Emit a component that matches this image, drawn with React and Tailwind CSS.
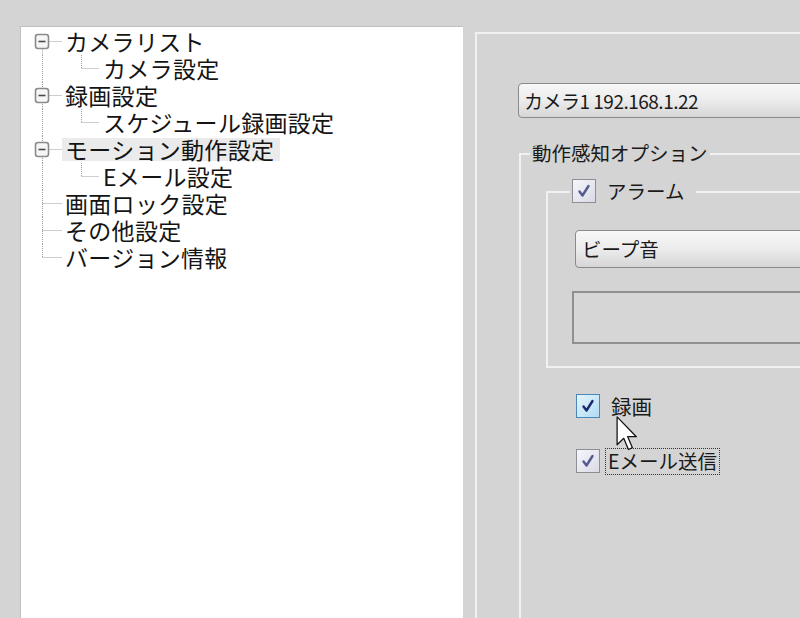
import React from 'react';

const jp = { fontFamily: '"Noto Sans CJK JP", "Noto Sans", sans-serif' };

const treeItems = [
    { label: 'カメラリスト', level: 0, box: true },
    { label: 'カメラ設定', level: 1 },
    { label: '録画設定', level: 0, box: true },
    { label: 'スケジュール録画設定', level: 1 },
    { label: 'モーション動作設定', level: 0, box: true, selected: true },
    { label: 'Eメール設定', level: 1 },
    { label: '画面ロック設定', level: 0 },
    { label: 'その他設定', level: 0 },
    { label: 'バージョン情報', level: 0, last: true },
];

function TreeGutter({ item, index }) {
    const w = item.level === 0 ? 41 : 79;
    const dot = { stroke: '#9c9c9c', strokeWidth: 1, strokeDasharray: '1 1' };
    // main vertical line through the root column
    const y1 = index === 0 ? 19.5 : 0;
    const y2 = item.last ? 13.5 : 27;
    return (
        <svg width={w} height="27" viewBox={`0 0 ${w} 27`} className="shrink-0">
            <line x1="21.5" y1={y1} x2="21.5" y2={y2} {...dot} />
            {item.level === 0 && (
                <line x1={item.box ? 27.5 : 21.5} y1="13.5" x2="41" y2="13.5" {...dot} />
            )}
            {item.level === 1 && (
                <>
                    <line x1="60.5" y1="0" x2="60.5" y2="13.5" {...dot} />
                    <line x1="60.5" y1="13.5" x2="78" y2="13.5" {...dot} />
                </>
            )}
            {item.box && (
                <>
                    <rect x="14.5" y="6.5" width="13" height="14" rx="2.5" fill="#f6f6f6" stroke="#8a8a8a" strokeWidth="1.6" />
                    <line x1="17.5" y1="13.5" x2="24.5" y2="13.5" stroke="#4a4a4a" strokeWidth="1.6" />
                </>
            )}
        </svg>
    );
}

function Check({ hover = false }) {
    return (
        <div
            className={`w-[24px] h-[24px] shrink-0 border flex items-center justify-center ${
                hover
                    ? 'border-[#4a86b8] bg-gradient-to-br from-[#e6f5fd] to-[#aedbf3]'
                    : 'border-[#8e8f94] bg-gradient-to-br from-[#f6f6fb] to-[#d9dae6]'
            }`}
        >
            <svg width="16" height="16" viewBox="0 0 16 16">
                <path
                    d="M3.5 8.5 L6.5 12.5 L12.5 3"
                    fill="none"
                    stroke={hover ? '#1d2b6c' : '#555a8e'}
                    strokeWidth="2.4"
                    strokeLinecap="round"
                    strokeLinejoin="round"
                />
            </svg>
        </div>
    );
}

export default function App() {
    return (
        <div className="w-[800px] h-[618px] bg-[#d4d4d4] flex overflow-hidden relative" style={jp}>
            <div className="pl-[20px] pt-[26px] h-full shrink-0">
                <div className="w-[443px] h-full bg-white border-t border-l border-[#bfbfbf] pt-[1px]">
                    {treeItems.map((item, i) => (
                        <div key={item.label} className="flex items-center h-[27px]">
                            <TreeGutter item={item} index={i} />
                            <span
                                className={`px-[3px] text-[23px] leading-[23px] tracking-[0.3px] text-[#141414] whitespace-nowrap ${
                                    item.selected ? 'bg-[#ebebeb] pr-[6px]' : ''
                                }`}
                            >
                                {item.label}
                            </span>
                        </div>
                    ))}
                </div>
            </div>

            <div className="flex-1 pl-[12px] pt-[32px] h-full">
                <div className="h-[700px] border-l-2 border-t-2 border-[#f1f1f1] pl-[41px] pt-[49px]">
                    <div className="w-[320px] h-[35px] rounded-[4px] border border-[#8a8a8a] bg-gradient-to-b from-[#f7f7f7] via-[#ececec] to-[#d6d6d6] flex items-center pl-[5px]">
                        <span className="text-[19px] tracking-[-0.5px] text-[#1a1a1a] leading-none">カメラ1 192.168.1.22</span>
                    </div>

                    <div className="ml-[1px] mt-[35px] w-[320px] h-[600px] border-l-2 border-t-2 border-[#f1f1f1]">
                        <div className="-mt-[13px] ml-[9px] w-fit bg-[#d4d4d4] px-[2px] h-[22px] flex items-center">
                            <span className="text-[19.5px] leading-none text-[#1a1a1a]">動作感知オプション</span>
                        </div>

                        <div className="ml-[25px] mt-[27px] border-l-2 border-t-2 border-b-2 border-[#f1f1f1] pb-[22px]">
                            <div className="-mt-[14px] ml-[22px] w-fit bg-[#d4d4d4] pl-[2px] pr-[12px] h-[24px] flex items-center gap-[11px]">
                                <Check />
                                <span className="text-[19.5px] leading-none text-[#1a1a1a]">アラーム</span>
                            </div>

                            <div className="ml-[27px] mt-[27px] h-[38px] rounded-[4px] border border-[#8a8a8a] bg-gradient-to-b from-[#f7f7f7] via-[#ececec] to-[#d6d6d6] flex items-center pl-[6px]">
                                <span className="text-[19.5px] leading-none text-[#1a1a1a]">ビープ音</span>
                            </div>

                            <div className="ml-[24px] mt-[23px] h-[53px] border-2 border-[#909090] bg-[#d6d6d6]" />
                        </div>

                        <div className="ml-[55px] mt-[26px] flex flex-col gap-[31px]">
                            <div className="flex items-center gap-[11px] h-[24px]">
                                <Check hover />
                                <span className="text-[20.5px] leading-none text-[#1a1a1a]">録画</span>
                            </div>
                            <div className="flex items-center gap-[5px] h-[24px]">
                                <Check />
                                <span className="border border-dotted border-[#333] px-[2px] h-[27px] flex items-center text-[19.5px] leading-none text-[#1a1a1a]">
                                    Eメール送信
                                </span>
                            </div>
                        </div>
                    </div>
                </div>
            </div>

            {/* mouse pointer */}
            <svg className="absolute left-[616px] top-[416px]" width="22" height="36" viewBox="0 0 12 20">
                <path
                    d="M0.5 0.5 L0.5 16 L4.2 12.4 L6.8 18.6 L9 17.6 L6.4 11.5 L11.2 11.5 Z"
                    fill="#ffffff"
                    stroke="#111"
                    strokeWidth="0.7"
                    strokeLinejoin="round"
                />
            </svg>
        </div>
    );
}
